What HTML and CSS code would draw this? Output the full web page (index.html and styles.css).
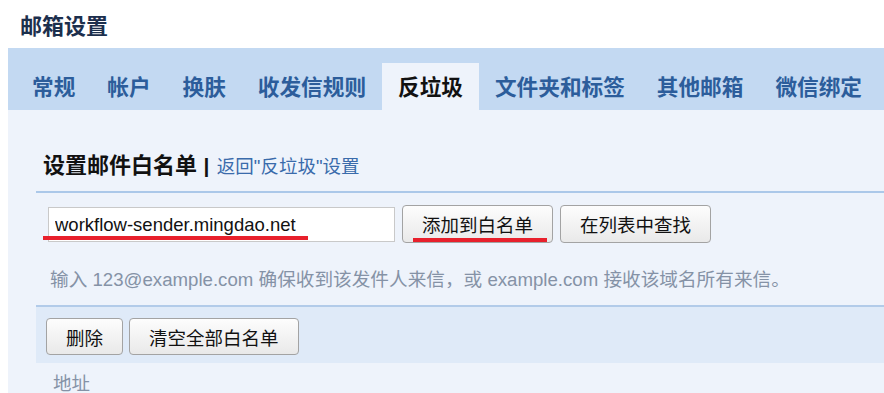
FILE: index.html
```html
<!DOCTYPE html>
<html lang="zh-CN">
<head>
    <meta charset="UTF-8">
    <meta name="viewport" content="width=device-width, initial-scale=1.0">
    <title>邮箱设置</title>
    <link rel="stylesheet" href="styles.css">
</head>
<body>
    <!-- 标题 -->
    <div class="page-title">邮箱设置</div>

    <!-- 选项卡 -->
    <nav class="tabs">
        <a class="tab">常规</a>
        <a class="tab">帐户</a>
        <a class="tab">换肤</a>
        <a class="tab">收发信规则</a>
        <a class="tab active">反垃圾</a>
        <a class="tab">文件夹和标签</a>
        <a class="tab">其他邮箱</a>
        <a class="tab">微信绑定</a>
    </nav>

    <!-- 白名单 -->
    <section class="panel">
        <div class="section-head">
            <span class="section-title">设置邮件白名单</span>
            <span class="sep">|</span>
            <a class="back-link">返回"反垃圾"设置</a>
        </div>

        <div class="add-row">
            <div class="field">
                <input class="addr-input" type="text" value="workflow-sender.mingdao.net">
                <span class="mark mark-input"></span>
            </div>
            <div class="field">
                <button class="btn btn-wide">添加到白名单</button>
                <span class="mark mark-btn"></span>
            </div>
            <button class="btn btn-wide">在列表中查找</button>
        </div>

        <p class="hint">输入 123@example.com 确保收到该发件人来信，或 example.com 接收该域名所有来信。</p>

        <div class="toolbar">
            <button class="btn">删除</button>
            <button class="btn">清空全部白名单</button>
        </div>

        <div class="col-head">地址</div>
    </section>
</body>
</html>
```

FILE: styles.css
```css
html, body {
    margin: 0;
    padding: 0;
    background: #fff;
    overflow: hidden;
}

body {
    font-family: "Liberation Sans", "Noto Sans CJK SC", sans-serif;
    color: #111;
}

.page-title {
    height: 48px;
    line-height: 54px;
    padding-left: 20px;
    font-size: 22px;
    font-weight: bold;
    color: #1c2f4d;
    box-sizing: border-box;
}

/* Вкладки */
.tabs {
    margin-left: 8px;
    height: 62px;
    padding-left: 8px;
    background: #c3d9f2;
    display: flex;
    align-items: flex-end;
}

.tab {
    height: 44px;
    padding: 3px 16px 0;
    line-height: 44px;
    font-size: 21.65px;
    font-weight: bold;
    color: #2c5d9b;
    white-space: nowrap;
}

.tab.active {
    background: #eef3fb;
    color: #111;
}

.panel {
    margin-left: 8px;
    padding-left: 28px;
    height: 300px;
    background: #eef3fb;
}

.section-head {
    padding: 40px 0 7px 7px;
    line-height: 32px;
    border-bottom: 2px solid #abc8e9;
    white-space: nowrap;
}

.section-title {
    font-size: 22px;
    font-weight: bold;
}

.sep {
    font-size: 21px;
    font-weight: bold;
    margin: 0 3px 0 2px;
}

.back-link {
    font-size: 18.5px;
    color: #3a6bab;
}

.add-row {
    margin-top: 12px;
    padding-left: 12px;
    display: flex;
    align-items: center;
    gap: 7px;
}

.field {
    position: relative;
    display: flex;
}

.addr-input {
    width: 347px;
    height: 35px;
    box-sizing: border-box;
    border: 1px solid #c9c9c9;
    background: #fff;
    padding: 2px 6px 0;
    font-family: "Liberation Sans", sans-serif;
    font-size: 18.5px;
    color: #111;
    outline: none;
}

.btn {
    height: 38px;
    padding: 0 19px;
    border: 1px solid #a3a3a3;
    border-radius: 4px;
    background: linear-gradient(#fdfdfd, #e9e9e9);
    font-family: "Liberation Sans", "Noto Sans CJK SC", sans-serif;
    font-size: 18.5px;
    color: #111;
    white-space: nowrap;
}

.btn-wide {
    width: 151px;
}

/* красные подчёркивания */
.mark {
    position: absolute;
    height: 4px;
    background: #e8202c;
}

.mark-input {
    left: -5px;
    top: 29px;
    width: 265px;
}

.mark-btn {
    left: 11px;
    top: 33px;
    width: 134px;
}

.hint {
    margin: 25px 0 0;
    padding-left: 14px;
    line-height: 24px;
    font-size: 18.65px;
    color: #8592a6;
    white-space: nowrap;
}

.toolbar {
    margin-top: 13px;
    height: 58px;
    padding: 11px 0 0 10px;
    box-sizing: border-box;
    border-top: 2px solid #b2cbe9;
    background: #dfeaf8;
    display: flex;
    gap: 6px;
}

.toolbar .btn {
    height: 37px;
}

.col-head {
    margin-top: 9px;
    padding-left: 17px;
    line-height: 24px;
    font-size: 18.5px;
    color: #8592a6;
}
```
